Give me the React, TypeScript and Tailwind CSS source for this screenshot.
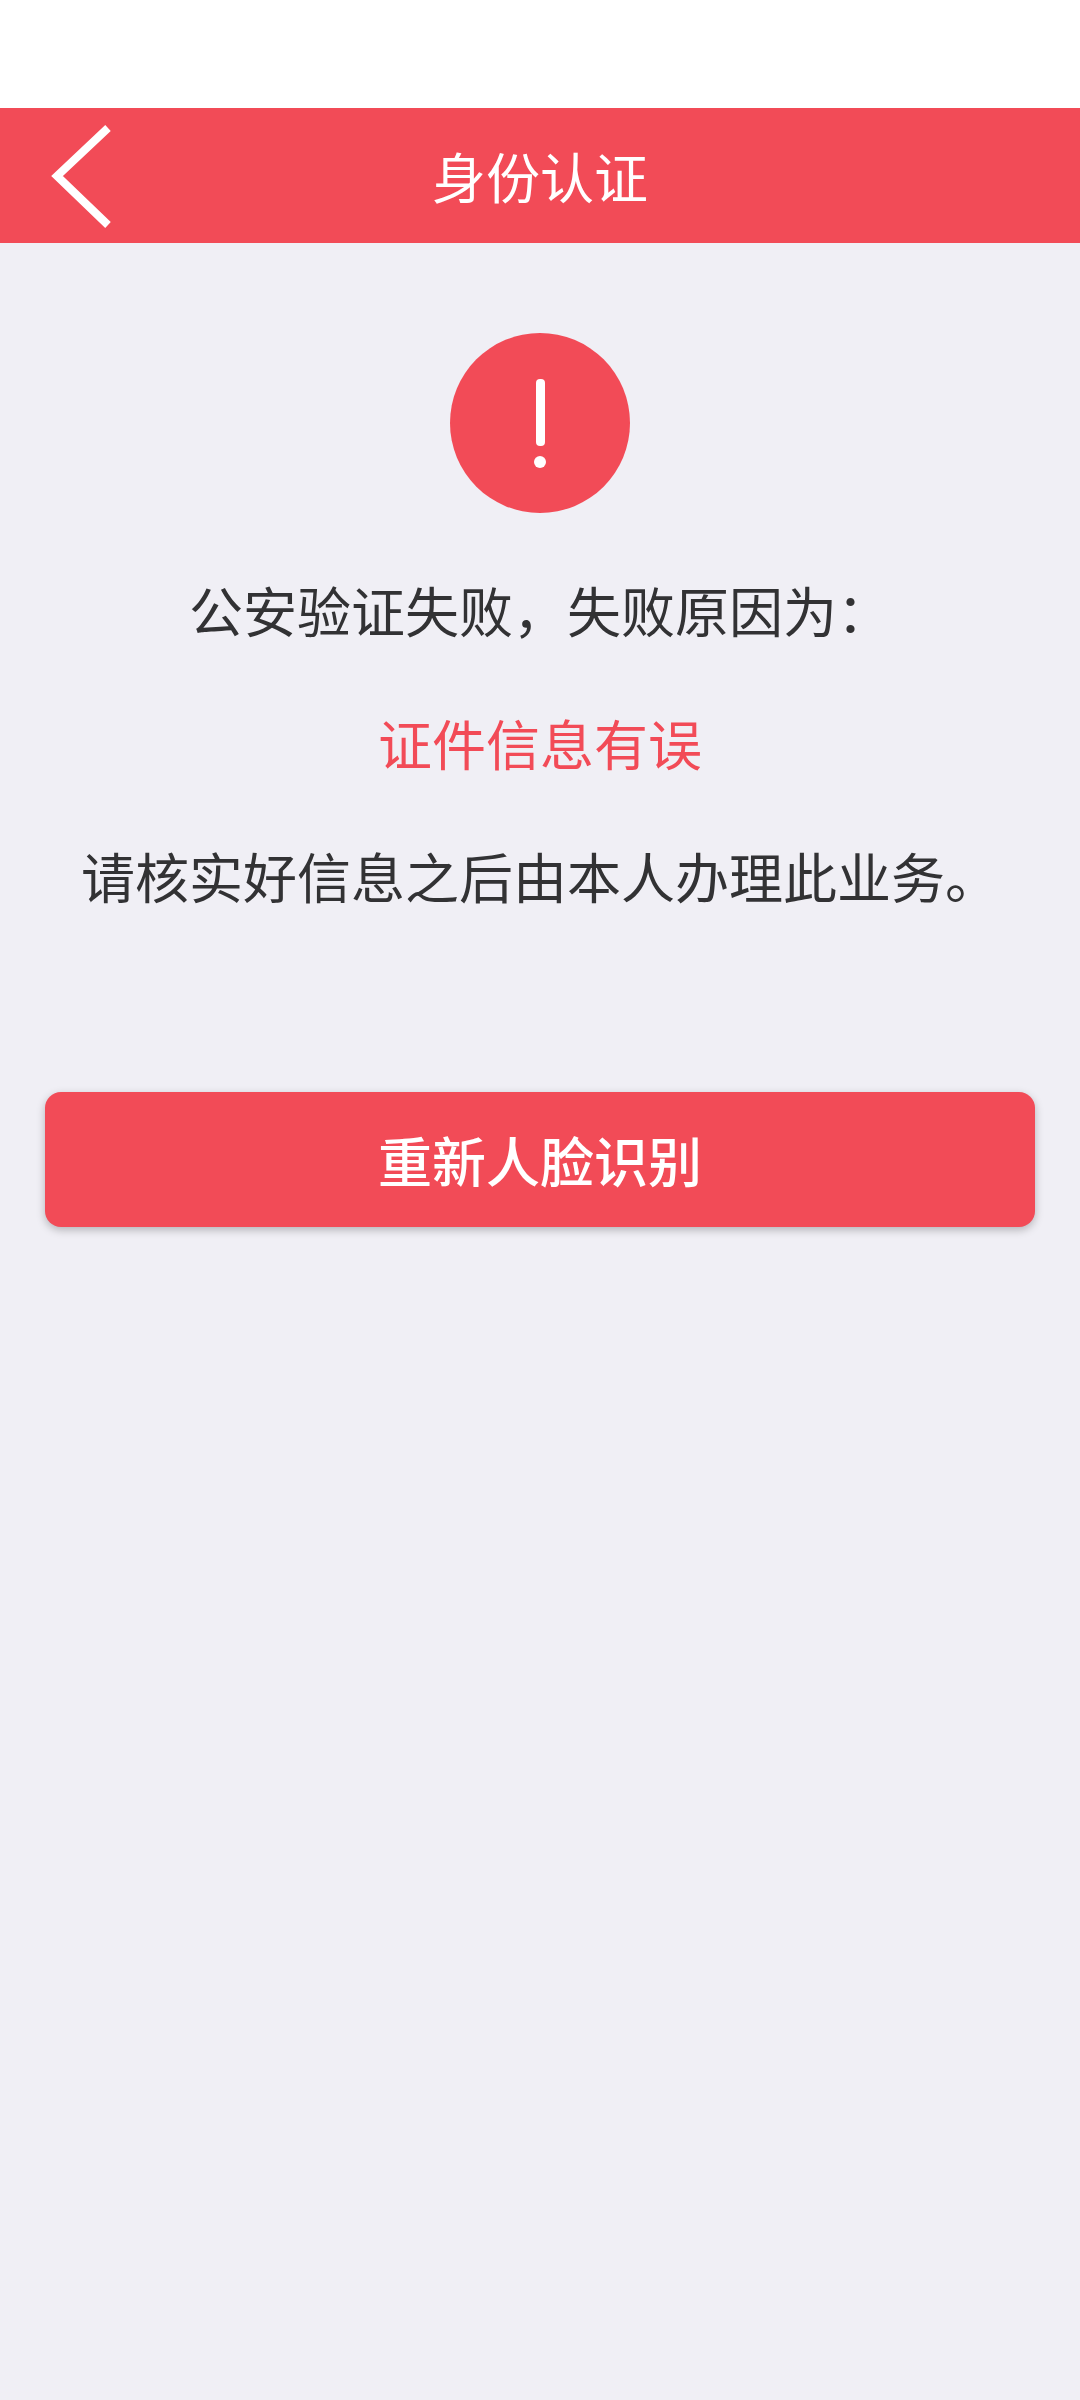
/* Identity verification result page, failed state. */

function BackIcon() {
  return (
    <svg
      className="h-[108px] w-[64px]"
      viewBox="0 0 64 108"
      fill="none"
      stroke="#fff"
      strokeWidth="8"
      aria-hidden="true"
    >
      <path d="M60 6 9 54 60 103" />
    </svg>
  );
}

function AlertIcon() {
  return (
    <svg className="size-[180px]" viewBox="0 0 180 180" role="img" aria-label="失败">
      <circle cx="90" cy="90" r="90" fill="#f24b57" />
      <rect x="86" y="46" width="9" height="67" rx="4" fill="#fff" />
      <circle cx="90" cy="129" r="6" fill="#fff" />
    </svg>
  );
}

export default function App() {
  return (
    <div className="flex min-h-screen flex-col bg-[#f0eff5] font-['Noto_Sans_CJK_SC',sans-serif] text-[54px] leading-[81px] text-[#323234]">
      {/* status bar area */}
      <div className="h-[108px] bg-white" />

      <header className="grid h-[135px] grid-cols-[1fr_auto_1fr] items-center bg-[#f24b57] px-12 text-white">
        <button type="button" aria-label="返回" className="justify-self-start">
          <BackIcon />
        </button>
        <h1>身份认证</h1>
      </header>

      <main className="flex flex-col px-[45px] pt-[90px]">
        <div className="flex justify-center">
          <AlertIcon />
        </div>

        <div className="mt-14 flex flex-col gap-[52px] text-center">
          <p>公安验证失败，失败原因为：</p>
          <p className="text-[#f24b57]">证件信息有误</p>
          <p>请核实好信息之后由本人办理此业务。</p>
        </div>

        <button
          type="button"
          className="mt-44 h-[135px] rounded-2xl bg-[#f24b57] font-medium text-white shadow-[0_3px_8px_rgba(0,0,0,0.25)]"
        >
          重新人脸识别
        </button>
      </main>
    </div>
  );
}
